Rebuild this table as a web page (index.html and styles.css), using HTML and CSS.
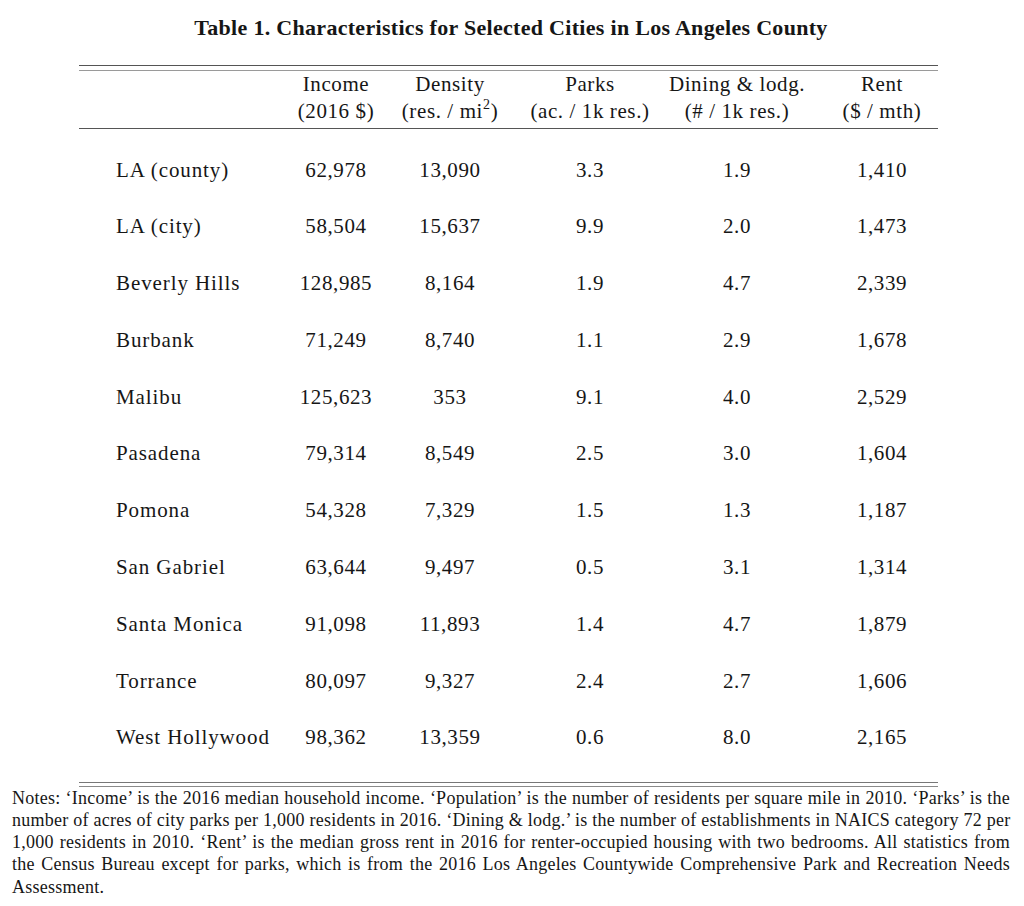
FILE: index.html
```html
<!DOCTYPE html>
<html lang="en">
<head>
<meta charset="utf-8">
<title>Table 1</title>
<link rel="stylesheet" href="styles.css">
</head>
<body>
<main class="page">
  <h1 class="title">Table 1. Characteristics for Selected Cities in Los Angeles County</h1>
  <div class="table-frame">
    <table class="data">
      <colgroup>
        <col class="w-name"><col class="w-income"><col class="w-density"><col class="w-parks"><col class="w-dining"><col class="w-rent">
      </colgroup>
      <thead>
        <tr>
          <th class="name"></th>
          <th>Income<br>(2016 $)</th>
          <th>Density<br>(res. / mi<sup>2</sup>)</th>
          <th class="c-parks">Parks<br>(ac. / 1k res.)</th>
          <th>Dining &amp; lodg.<br>(# / 1k res.)</th>
          <th class="c-rent">Rent<br>($ / mth)</th>
        </tr>
      </thead>
      <tbody>
        <tr><td class="name">LA (county)</td><td>62,978</td><td>13,090</td><td class="c-parks">3.3</td><td>1.9</td><td class="c-rent">1,410</td></tr>
        <tr><td class="name">LA (city)</td><td>58,504</td><td>15,637</td><td class="c-parks">9.9</td><td>2.0</td><td class="c-rent">1,473</td></tr>
        <tr><td class="name">Beverly Hills</td><td>128,985</td><td>8,164</td><td class="c-parks">1.9</td><td>4.7</td><td class="c-rent">2,339</td></tr>
        <tr><td class="name">Burbank</td><td>71,249</td><td>8,740</td><td class="c-parks">1.1</td><td>2.9</td><td class="c-rent">1,678</td></tr>
        <tr><td class="name">Malibu</td><td>125,623</td><td>353</td><td class="c-parks">9.1</td><td>4.0</td><td class="c-rent">2,529</td></tr>
        <tr><td class="name">Pasadena</td><td>79,314</td><td>8,549</td><td class="c-parks">2.5</td><td>3.0</td><td class="c-rent">1,604</td></tr>
        <tr><td class="name">Pomona</td><td>54,328</td><td>7,329</td><td class="c-parks">1.5</td><td>1.3</td><td class="c-rent">1,187</td></tr>
        <tr><td class="name">San Gabriel</td><td>63,644</td><td>9,497</td><td class="c-parks">0.5</td><td>3.1</td><td class="c-rent">1,314</td></tr>
        <tr><td class="name">Santa Monica</td><td>91,098</td><td>11,893</td><td class="c-parks">1.4</td><td>4.7</td><td class="c-rent">1,879</td></tr>
        <tr><td class="name">Torrance</td><td>80,097</td><td>9,327</td><td class="c-parks">2.4</td><td>2.7</td><td class="c-rent">1,606</td></tr>
        <tr><td class="name">West Hollywood</td><td>98,362</td><td>13,359</td><td class="c-parks">0.6</td><td>8.0</td><td class="c-rent">2,165</td></tr>
      </tbody>
    </table>
  </div>
  <div class="notes">
    <span class="line">Notes: ‘Income’ is the 2016 median household income. ‘Population’ is the number of residents per square mile in 2010. ‘Parks’ is the</span>
    <span class="line">number of acres of city parks per 1,000 residents in 2016. ‘Dining &amp; lodg.’ is the number of establishments in NAICS category 72 per</span>
    <span class="line">1,000 residents in 2010. ‘Rent’ is the median gross rent in 2016 for renter-occupied housing with two bedrooms. All statistics from</span>
    <span class="line">the Census Bureau except for parks, which is from the 2016 Los Angeles Countywide Comprehensive Park and Recreation Needs</span>
    <span class="line last">Assessment.</span>
  </div>
</main>
</body>
</html>
```
FILE: styles.css
```css
html, body {
  margin: 0;
  padding: 0;
  background: #ffffff;
}

body {
  color: #161616;
  font-family: "Liberation Serif", "Times New Roman", serif;
}

.page {
  width: 998px;
  margin-left: 12px;
  padding-top: 16px;
}

.title {
  margin: 0 0 25px;
  font-size: 22px;
  line-height: 24px;
  font-weight: bold;
  letter-spacing: 0.3px;
  text-align: center;
}

.table-frame {
  width: 859px;
  margin-left: 67px;
  border-top: 1px solid #555555;
  border-bottom: 1px solid #8a8a8a;
  padding: 4px 0 3px;
}

.data {
  width: 100%;
  table-layout: fixed;
  border-collapse: collapse;
  border-top: 1px solid #9a9a9a;
  border-bottom: 1px solid #777777;
  font-size: 21px;
  letter-spacing: 0.6px;
}

.w-name { width: 200px; }
.w-income { width: 114px; }
.w-density { width: 114px; }
.w-parks { width: 154px; }
.w-dining { width: 152px; }
.w-rent { width: 125px; }

.data th,
.data td {
  padding: 0;
  text-align: center;
  vertical-align: middle;
  white-space: nowrap;
  font-weight: normal;
}

.data th {
  line-height: 27px;
  padding-bottom: 3px;
  border-bottom: 1px solid #555555;
}

.data sup {
  font-size: 14px;
  line-height: 0;
  vertical-align: 9px;
}

.data td {
  line-height: 27px;
  padding-top: 14.9px;
  padding-bottom: 14.9px;
}

.data tbody tr:first-child td {
  padding-top: 27.5px;
}

.data tbody tr:last-child td {
  padding-bottom: 30.5px;
}

.data .name {
  text-align: left;
  padding-left: 37px;
  letter-spacing: 0.9px;
}

.data .c-parks {
  padding-left: 12px;
}

.data .c-rent {
  padding-left: 13px;
}

.notes {
  font-size: 18px;
  line-height: 22.2px;
  letter-spacing: 0.25px;
}

.notes .line {
  display: block;
  white-space: nowrap;
  text-align: justify;
  text-align-last: justify;
}

.notes .line.last {
  text-align-last: left;
}
```
